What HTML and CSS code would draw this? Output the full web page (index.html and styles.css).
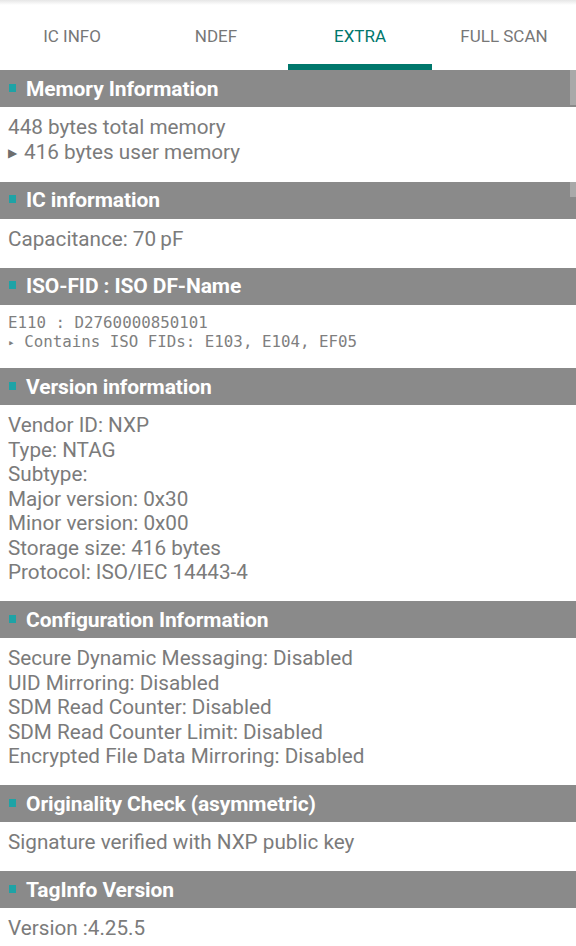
FILE: index.html
```html
<!DOCTYPE html>
<html>
<head>
<meta charset="utf-8">
<link rel="stylesheet" href="styles.css">
</head>
<body>
<div class="topshade"></div>
<nav class="tabs">
  <div class="tab">IC INFO</div>
  <div class="tab">NDEF</div>
  <div class="tab active">EXTRA</div>
  <div class="tab">FULL SCAN</div>
</nav>
<main class="list">
  <section class="sec">
    <h2 class="hdr"><span class="sq"></span>Memory Information<span class="scroll s1"></span></h2>
    <div class="body">
      <div>448 bytes total memory</div>
      <div><span class="tri">▶</span>416 bytes user memory</div>
    </div>
  </section>
  <section class="sec">
    <h2 class="hdr"><span class="sq"></span>IC information<span class="scroll s2"></span></h2>
    <div class="body">
      <div>Capacitance: 70&#8201;pF</div>
    </div>
  </section>
  <section class="sec">
    <h2 class="hdr"><span class="sq"></span>ISO-FID : ISO DF-Name</h2>
    <div class="body mono">
      <div>E110 : D2760000850101</div>
      <div><span class="tri2">▸</span> Contains ISO FIDs: E103, E104, EF05</div>
    </div>
  </section>
  <section class="sec">
    <h2 class="hdr"><span class="sq"></span>Version information</h2>
    <div class="body">
      <div>Vendor ID: NXP</div>
      <div>Type: NTAG</div>
      <div>Subtype:</div>
      <div>Major version: 0x30</div>
      <div>Minor version: 0x00</div>
      <div>Storage size: 416 bytes</div>
      <div>Protocol: ISO/IEC 14443-4</div>
    </div>
  </section>
  <section class="sec">
    <h2 class="hdr"><span class="sq"></span>Configuration Information</h2>
    <div class="body">
      <div>Secure Dynamic Messaging: Disabled</div>
      <div>UID Mirroring: Disabled</div>
      <div>SDM Read Counter: Disabled</div>
      <div>SDM Read Counter Limit: Disabled</div>
      <div>Encrypted File Data Mirroring: Disabled</div>
    </div>
  </section>
  <section class="sec">
    <h2 class="hdr"><span class="sq"></span>Originality Check (asymmetric)</h2>
    <div class="body">
      <div>Signature verified with NXP public key</div>
    </div>
  </section>
  <section class="sec">
    <h2 class="hdr"><span class="sq"></span>TagInfo Version</h2>
    <div class="body">
      <div>Version :4.25.5</div>
    </div>
  </section>
</main>
</body>
</html>
```

FILE: styles.css
```css
* { box-sizing: border-box; }
html, body {
  margin: 0;
  padding: 0;
  background: #ffffff;
  font-family: Roboto, "Noto Sans", sans-serif;
  width: 576px;
  height: 946px;
  overflow: hidden;
  position: relative;
}
.topshade {
  position: absolute;
  left: 0; top: 0; right: 0;
  height: 5px;
  background: linear-gradient(#e6e6e6, rgba(255,255,255,0));
}
.tabs {
  display: grid;
  grid-template-columns: repeat(4, 1fr);
  height: 70px;
}
.tab {
  display: flex;
  align-items: center;
  justify-content: center;
  font-size: 17px;
  font-weight: 400;
  color: #777777;
  border-bottom: 6px solid transparent;
  padding-top: 8px;
}
.tab.active {
  color: #00776c;
  border-bottom-color: #00776c;
}
.sec { display: block; }
.hdr {
  position: relative;
  margin: 0;
  height: 37px;
  background: #8a8a8a;
  color: #ffffff;
  font-size: 21px;
  font-weight: 700;
  display: flex;
  align-items: center;
  padding-left: 9px;
  letter-spacing: -0.1px;
}
.sq {
  width: 7px;
  height: 8px;
  background: #1ea3a6;
  margin-right: 10px;
  margin-top: -2px;
  flex: none;
}
.scroll {
  position: absolute;
  right: 0;
  width: 6px;
  background: #a9a9a9;
}
.s1 { top: 0; height: 35px; }
.s2 { top: 0; height: 15px; }
.body {
  padding: 8px 8px 16.5px 8px;
  font-size: 20.7px;
  line-height: 24.5px;
  color: #7b7b7b;
}
.tri {
  display: inline-block;
  font-family: "DejaVu Sans", sans-serif;
  font-size: 12px;
  color: #6e6e6e;
  width: 16px;
  vertical-align: 2px;
}
.mono {
  font-family: "DejaVu Sans Mono", monospace;
  font-size: 15.8px;
  line-height: 19px;
  color: #7f7f7f;
}
.tri2 {
  font-size: 11px;
  vertical-align: 1px;
}
```
